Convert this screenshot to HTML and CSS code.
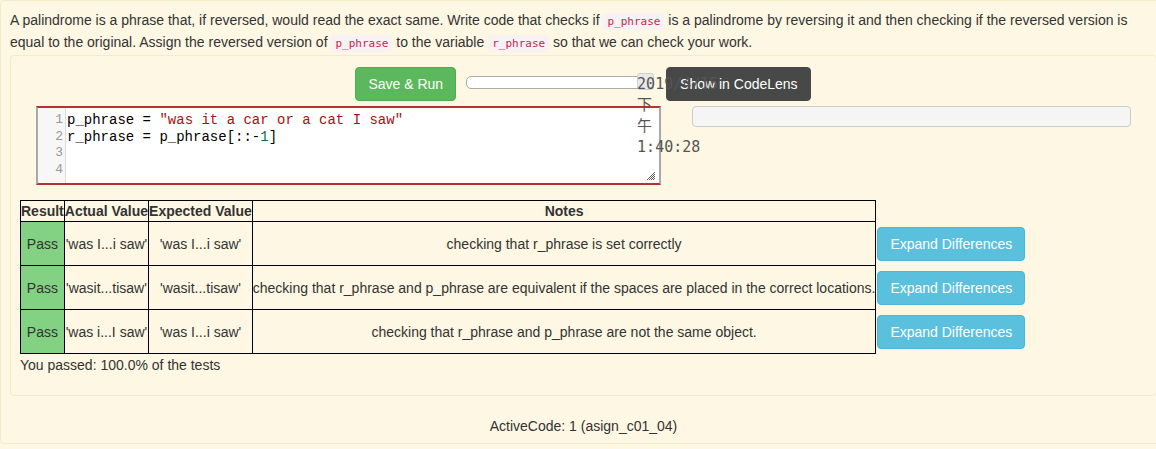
FILE: index.html
```html
<!DOCTYPE html>
<html>
<head>
<meta charset="utf-8">
<link rel="stylesheet" href="styles.css">
</head>
<body>
<div class="outer">
  <p class="desc">A palindrome is a phrase that, if reversed, would read the exact same. Write code that checks if <code>p_phrase</code> is a palindrome by reversing it and then checking if the reversed version is equal to the original. Assign the reversed version of <code>p_phrase</code> to the variable <code>r_phrase</code> so that we can check your work.</p>
  <div class="panel">
    <div class="controls">
      <button class="btn btn-success">Save &amp; Run</button>
      <div class="track"><span class="thumb"></span></div>
      <span class="date">2019/4/15 下午 1:40:28</span>
      <button class="btn btn-dark">Show in CodeLens</button>
    </div>
    <div class="work">
      <div class="editor">
        <div class="gutter">
          <div>1</div><div>2</div><div>3</div><div>4</div>
        </div>
        <div class="lines">
          <div class="ln">p_phrase = <span class="str">"was it a car or a cat I saw"</span></div>
          <div class="ln">r_phrase = p_phrase[::-<span class="num">1</span>]</div>
          <div class="ln">&nbsp;</div>
          <div class="ln">&nbsp;</div>
        </div>
        <svg class="grip" width="8" height="8" viewBox="0 0 8 8"><path d="M8 0L0 8M8 2L2 8M8 4L4 8M8 6L6 8" stroke="#333" stroke-width="0.8"/></svg>
      </div>
      <div class="progress"></div>
    </div>
    <table class="results">
      <tr>
        <th>Result</th><th>Actual Value</th><th>Expected Value</th><th>Notes</th><th class="nob"></th>
      </tr>
      <tr>
        <td class="pass">Pass</td><td>'was I...i saw'</td><td>'was I...i saw'</td><td>checking that r_phrase is set correctly</td>
        <td class="nob"><button class="btn btn-info">Expand Differences</button></td>
      </tr>
      <tr>
        <td class="pass">Pass</td><td>'wasit...tisaw'</td><td>'wasit...tisaw'</td><td>checking that r_phrase and p_phrase are equivalent if the spaces are placed in the correct locations.</td>
        <td class="nob"><button class="btn btn-info">Expand Differences</button></td>
      </tr>
      <tr>
        <td class="pass">Pass</td><td>'was i...I saw'</td><td>'was I...i saw'</td><td>checking that r_phrase and p_phrase are not the same object.</td>
        <td class="nob"><button class="btn btn-info">Expand Differences</button></td>
      </tr>
    </table>
    <div class="passed">You passed: 100.0% of the tests</div>
  </div>
  <div class="footer">ActiveCode: 1 (asign_c01_04)</div>
</div>
</body>
</html>
```
FILE: styles.css
```css
html, body {
  margin: 0;
  padding: 0;
  overflow: hidden;
  background: #fdf7e3;
}
body {
  font-family: "Liberation Sans", Arial, sans-serif;
  font-size: 14px;
  color: #333;
}
.outer {
  width: 1168px;
  height: 444px;
  padding: 9px 10px 0 9px;
  box-sizing: border-box;
  border: 1px solid #f6ebc9;
  border-radius: 4px;
  background: #fdf7e3;
}
.desc {
  margin: 0 0 1px;
  line-height: 21px;
}
code {
  font-family: "DejaVu Sans Mono", monospace;
  font-size: 11px;
  color: #c7254e;
  background: #f9f2f4;
  padding: 2px 4px;
  border-radius: 4px;
}
.panel {
  border: 1px solid #f6ebc9;
  border-radius: 4px;
  padding: 11px 10px 21px 9px;
}
.controls {
  display: flex;
  justify-content: center;
  align-items: baseline;
  height: 33px;
  margin-bottom: 6px;
}
.btn {
  font-family: "Liberation Sans", Arial, sans-serif;
  font-size: 14px;
  line-height: 20px;
  padding: 6px 12px;
  border: 1px solid transparent;
  border-radius: 4px;
  color: #fff;
  cursor: pointer;
}
.btn-success {
  background: #5cb85c;
  border-color: #4cae4c;
}
.btn-dark {
  background: #474949;
  border-color: #474949;
  padding: 6px 12px 6px 13px;
}
.btn-info {
  background: #5bc0de;
  border-color: #46b8da;
  display: block;
  margin: 5px 0 5px 1px;
}
.track {
  position: relative;
  width: 181px;
  height: 11px;
  margin-left: 10px;
  border: 1px solid #a9a9a9;
  border-radius: 5px;
  background: #fff;
}
.thumb {
  position: absolute;
  left: 170px;
  top: -4px;
  width: 15px;
  height: 15px;
  border: 1px solid #cfcfcf;
  border-radius: 3px;
  background: #e9e9e9;
}
.date {
  position: relative;
  z-index: 2;
  display: inline-block;
  width: 20px;
  margin-left: -12px;
  margin-right: 9px;
  font-family: "DejaVu Sans Mono", "Noto Sans CJK SC", monospace;
  font-size: 15px;
  line-height: 21px;
  color: #555;
  white-space: normal;
}
.work {
  display: flex;
  align-items: flex-start;
  margin-left: 16px;
  gap: 31px;
}
.editor {
  position: relative;
  display: flex;
  width: 621px;
  height: 75px;
  background: #fff;
  border-style: solid;
  border-width: 2px;
  border-color: #b43232 #a9a9a9 #b43232 #a9a9a9;
  font-family: "Liberation Mono", "Courier New", monospace;
  font-size: 14px;
  line-height: 16.7px;
}
.gutter {
  width: 28px;
  background: #f7f7f7;
  border-right: 1px solid #ddd;
  color: #999;
  text-align: right;
  padding: 4px 0 0;
  box-sizing: border-box;
}
.gutter div {
  padding-right: 2px;
  font-size: 13px;
}
.lines {
  padding: 4px 0 0 1px;
  color: #000;
}
.ln {
  white-space: pre;
}
.str { color: #a11; }
.num { color: #164; }
.grip {
  position: absolute;
  right: 4px;
  bottom: 3px;
}
.progress {
  width: 437px;
  height: 19px;
  background: #f5f5f5;
  border: 1px solid #ccc;
  border-radius: 4px;
}
.results {
  border-collapse: collapse;
  margin-top: 15px;
}
.results th, .results td {
  border: 1px solid #000;
  padding: 0;
  text-align: center;
  line-height: 20px;
}
.results th {
  font-weight: bold;
}
.results .nob {
  border: none;
  padding: 0;
}
.results .pass {
  background: #83d183;
  padding: 0 5px;
}
.passed {
  margin-top: 2px;
  line-height: 18px;
}
.footer {
  text-align: center;
  padding-top: 20px;
  line-height: 21px;
}
```
